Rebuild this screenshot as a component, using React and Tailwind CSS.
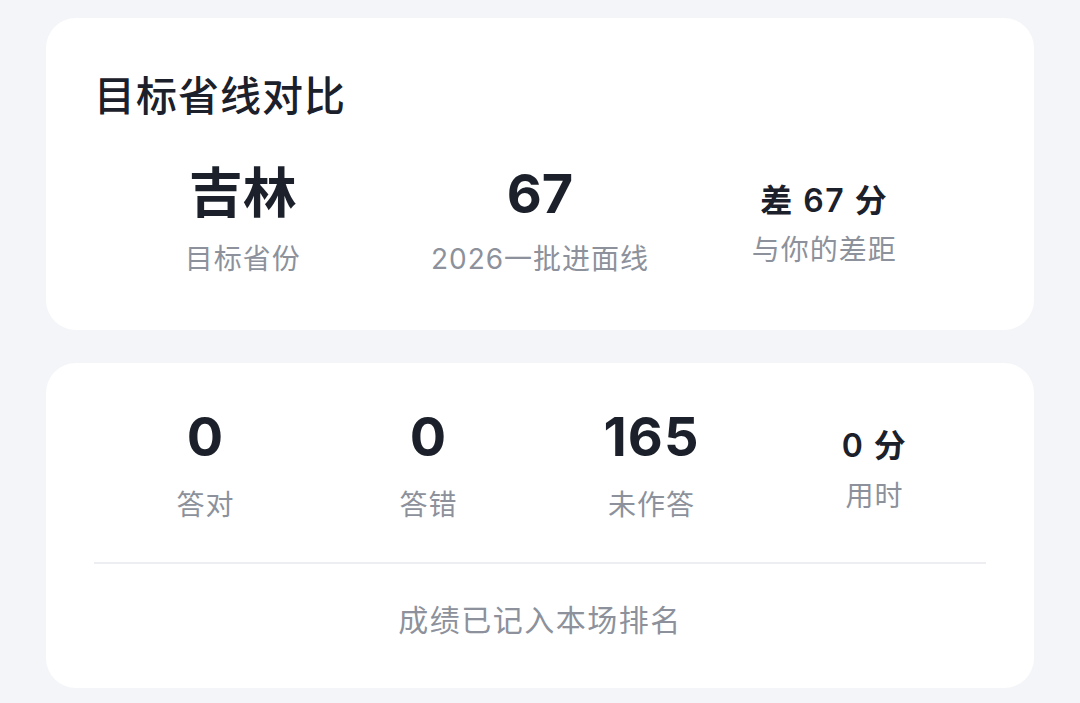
import React from "react";

const font = { fontFamily: '"Inter", "Noto Sans CJK SC", sans-serif' };

function Stat({ value, label, small, shift }) {
  return (
    <div className={`flex flex-col items-center ${shift ? "pr-[26px]" : ""}`}>
      {small ? (
        <div className="mt-[18px] text-[32px] leading-none font-semibold tracking-[1.5px] text-[#1b202a] whitespace-pre">{value}</div>
      ) : (
        <div className="text-[54px] leading-none font-bold text-[#1b202a]">{value}</div>
      )}
      <div className={`${small ? "mt-[19px]" : "mt-[24px]"} text-[28px] leading-none tracking-[1px] text-[#8c919b]`}>{label}</div>
    </div>
  );
}

function Stat2({ value, label, small }) {
  return (
    <div className="flex flex-col items-center">
      {small ? (
        <div className="mt-[20px] text-[32px] leading-none font-semibold tracking-[1.5px] text-[#1b202a] whitespace-pre">{value}</div>
      ) : (
        <div className="text-[54px] leading-none font-bold tracking-[1px] text-[#1b202a]">{value}</div>
      )}
      <div className={`${small ? "mt-[20px]" : "mt-[27px]"} text-[28px] leading-none tracking-[1px] text-[#8c919b]`}>{label}</div>
    </div>
  );
}

export default function App() {
  return (
    <div style={font} className="min-h-[703px] bg-[#f4f5f8] px-[46px] pt-[18px] flex flex-col gap-[33px]">
      <div className="h-[312px] rounded-[30px] bg-white px-12 pt-[58px]">
        <div className="text-[41px] leading-none font-medium tracking-[1px] text-[#1b202a]">目标省线对比</div>
        <div className="mt-[50px] grid grid-cols-3">
          <Stat value="吉林" label="目标省份" />
          <Stat value="67" label="2026一批进面线" />
          <Stat value="差 67 分" label="与你的差距" small shift />
        </div>
      </div>
      <div className="h-[325px] rounded-[30px] bg-white px-12 pt-[47px]">
        <div className="grid grid-cols-4">
          <Stat2 value="0" label="答对" />
          <Stat2 value="0" label="答错" />
          <Stat2 value="165" label="未作答" />
          <Stat2 value="0 分" label="用时" small />
        </div>
        <div className="mt-[43px] h-[2px] bg-[#eceef1]" />
        <div className="mt-[41px] text-center text-[30px] leading-none tracking-[1.5px] text-[#8c919b]">成绩已记入本场排名</div>
      </div>
    </div>
  );
}
